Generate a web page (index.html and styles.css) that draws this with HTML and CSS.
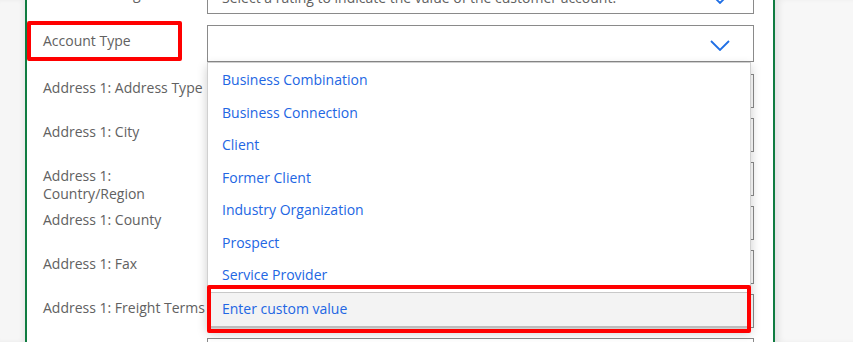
FILE: index.html
```html
<!DOCTYPE html>
<html lang="en">
<head>
  <meta charset="UTF-8" />
  <title>Account form</title>
  <link rel="stylesheet" href="styles.css">
</head>
<body>
  <div class="screen">
    <div class="gutter"></div>

    <main class="panel">
      <div class="form">
        <!-- ligne coupée en haut -->
        <div class="row row-top">
          <span class="label">Account Rating</span>
          <div class="field">
            <span class="placeholder">Select a rating to indicate the value of the customer account.</span>
            <svg class="chevron" viewBox="0 0 20 11"><path d="M1 1 L10 10 L19 1" /></svg>
          </div>
        </div>

        <div class="row row-account">
          <span class="label label-marked">Account Type</span>
          <div class="field field-open">
            <svg class="chevron" viewBox="0 0 20 11"><path d="M1 1 L10 10 L19 1" /></svg>

            <ul class="dropdown">
              <li>Business Combination</li>
              <li>Business Connection</li>
              <li>Client</li>
              <li>Former Client</li>
              <li>Industry Organization</li>
              <li>Prospect</li>
              <li>Service Provider</li>
              <li class="custom">Enter custom value</li>
            </ul>
          </div>
        </div>

        <div class="row"><span class="label">Address 1: Address Type</span><div class="field"></div></div>
        <div class="row"><span class="label">Address 1: City</span><div class="field"></div></div>
        <div class="row"><span class="label">Address 1: Country/Region</span><div class="field"></div></div>
        <div class="row"><span class="label">Address 1: County</span><div class="field"></div></div>
        <div class="row"><span class="label">Address 1: Fax</span><div class="field"></div></div>
        <div class="row"><span class="label">Address 1: Freight Terms</span><div class="field"></div></div>
        <div class="row"><span class="label">Address 1: Line 1</span><div class="field"></div></div>
      </div>
    </main>

    <div class="gutter gutter-right"></div>
  </div>
</body>
</html>
```

FILE: styles.css
```css
html, body {
  height: 100%;
  margin: 0;
  padding: 0;
  overflow: hidden;
  font-family: "Open Sans", "Noto Sans", sans-serif;
  font-size: 14px;
  background: #f7f7f7;
  color: #616161;
}

.screen {
  display: flex;
  height: 100%;
}

.gutter {
  width: 25px;
  flex: none;
  background: #f6f6f6;
  box-shadow: inset -3px 0 4px rgba(0,0,0,0.05);
}
.gutter-right {
  flex: 1;
  background: #f7f7f7;
  box-shadow: inset 6px 0 6px -2px rgba(0,0,0,0.08);
}

.panel {
  width: 746px;
  flex: none;
  background: #fff;
  border-left: 2px solid #107c41;
  border-right: 2px solid #107c41;
}

.form {
  margin-top: -20px;
  padding-right: 19px;
}

.row {
  display: flex;
  height: 44px;
}

.row-top {
  height: 45px;
}
.row-account {
  height: 49px;
}

.label {
  width: 180px;
  flex: none;
  box-sizing: border-box;
  padding: 5px 0 0 16px;
  line-height: 18px;
}

.label-marked {
  width: 155px;
  height: 40px;
  margin: -4px 25px 0 0;
  padding: 7px 0 0 12px;
  border: 4px solid #ff0000;
  border-radius: 2px;
}

.field {
  flex: none;
  width: 547px;
  height: 34px;
  box-sizing: border-box;
  border: 1px solid #8a8a8a;
  position: relative;
  display: flex;
  align-items: center;
  padding-left: 14px;
}

.row-account .field {
  height: 37px;
}

.placeholder {
  color: #616161;
  white-space: nowrap;
}

.chevron {
  position: absolute;
  right: 23px;
  top: 50%;
  width: 20px;
  height: 11px;
  margin-top: -4px;
  fill: none;
  stroke: #1f6fe5;
  stroke-width: 1.8;
}

/* liste ouverte */
.dropdown {
  position: absolute;
  top: 36px;
  left: -1px;
  width: 544px;
  margin: 0;
  padding: 1px 0 0;
  list-style: none;
  background: #fff;
  border: 1px solid #d0d0d0;
  box-sizing: border-box;
  box-shadow: 0 4px 10px rgba(0,0,0,0.2);
  z-index: 5;
}

.dropdown li {
  height: 32.5px;
  line-height: 32.5px;
  padding-left: 14px;
  color: #2266e3;
  white-space: nowrap;
}

.dropdown li.custom {
  position: relative;
  height: 33px;
  line-height: 32px;
  background: #f3f3f3;
  border-top: 1px solid #c8c8c8;
  border-bottom: 2px solid #bdbdbd;
}

.dropdown li.custom::after {
  content: "";
  position: absolute;
  top: -8px;
  bottom: -7px;
  left: -1px;
  right: -1px;
  border: 4px solid #ff0000;
  border-radius: 2px;
}
```
